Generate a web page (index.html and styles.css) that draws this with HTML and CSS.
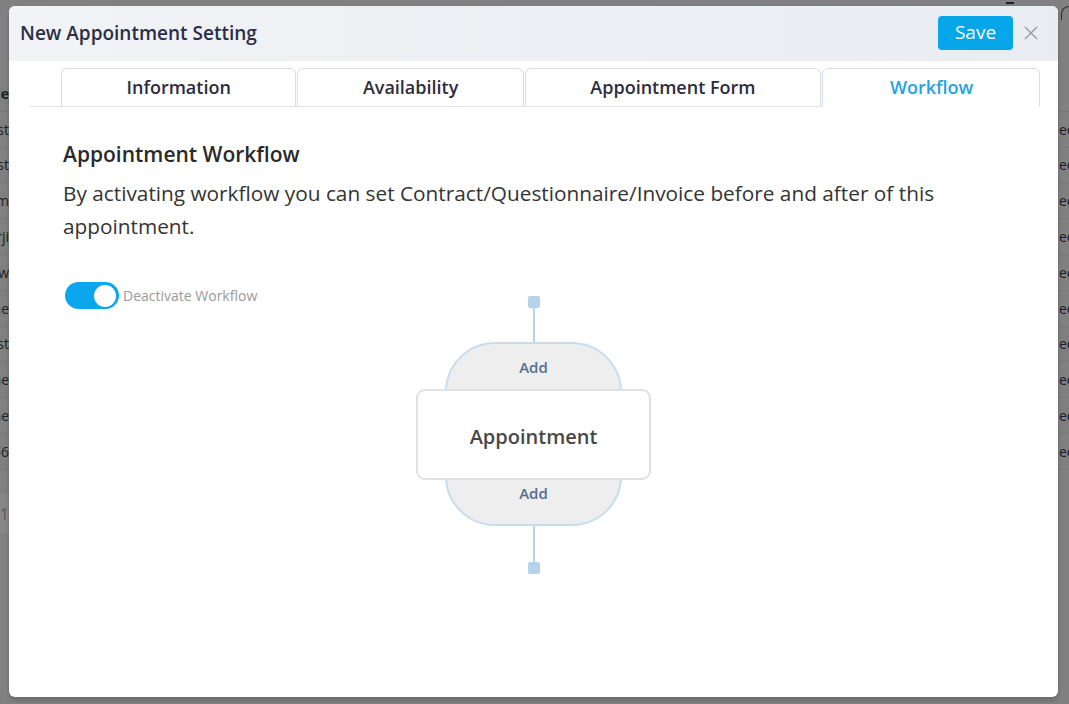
FILE: index.html
```html
<!DOCTYPE html>
<html>
<head>
<meta charset="utf-8">
<link rel="stylesheet" href="styles.css">
</head>
<body>
<div class="page">
  <div class="bg-top"><span class="bg-dash"></span><span class="bg-arc"></span></div>
  <div class="bg-table">
    <div class="bg-row bg-head"><span class="l">Title</span><span class="r"></span></div>
    <div class="bg-row"><span class="l">Test</span><span class="r">ec</span></div>
    <div class="bg-row"><span class="l">Test</span><span class="r">ec</span></div>
    <div class="bg-row"><span class="l">Firm</span><span class="r">ec</span></div>
    <div class="bg-row"><span class="l">Nurji</span><span class="r">ec</span></div>
    <div class="bg-row"><span class="l">New</span><span class="r">ec</span></div>
    <div class="bg-row"><span class="l">One</span><span class="r">ec</span></div>
    <div class="bg-row"><span class="l">Test</span><span class="r">ec</span></div>
    <div class="bg-row"><span class="l">Name</span><span class="r">ec</span></div>
    <div class="bg-row"><span class="l">Name</span><span class="r">ec</span></div>
    <div class="bg-row"><span class="l">456</span><span class="r">ec</span></div>
  </div>
  <div class="bg-pager"><span class="l">1</span></div>
</div>

<div class="modal">
  <div class="modal-header">
    <div class="modal-title">New Appointment Setting</div>
    <div class="header-actions">
      <button class="btn-save">Save</button>
      <span class="btn-close">
        <svg width="14" height="14" viewBox="0 0 14 14"><path d="M1 1L13 13M13 1L1 13" stroke="#9a9a9a" stroke-width="1.4" fill="none"/></svg>
      </span>
    </div>
  </div>
  <div class="tabs">
    <div class="tab">Information</div>
    <div class="tab">Availability</div>
    <div class="tab">Appointment Form</div>
    <div class="tab active">Workflow</div>
  </div>
  <div class="content">
    <h2 class="section-title">Appointment Workflow</h2>
    <p class="section-desc">By activating workflow you can set Contract/Questionnaire/Invoice before and after of this appointment.</p>
    <div class="workflow-area">
      <div class="toggle-row">
        <span class="toggle"><span class="knob"></span></span>
        <span class="toggle-label">Deactivate Workflow</span>
      </div>
      <div class="diagram">
        <span class="node-dot"></span>
        <span class="connector"></span>
        <div class="capsule">
          <div class="add">Add</div>
          <div class="appt-box">Appointment</div>
          <div class="add add-bottom">Add</div>
        </div>
        <span class="connector bottom"></span>
        <span class="node-dot"></span>
      </div>
      <div></div>
    </div>
  </div>
</div>
</body>
</html>
```
FILE: styles.css
```css
* { box-sizing: border-box; }
html, body { margin: 0; padding: 0; }
body {
  width: 1069px;
  height: 704px;
  overflow: hidden;
  background: #808080;
  font-family: "Open Sans", "Noto Sans", sans-serif;
  position: relative;
}

/* dimmed page behind the modal */
.page { color: #1f1f1f; font-size: 14px; }
.bg-top { height: 76px; position: relative; }
.bg-dash { position: absolute; left: 1006px; top: 2px; width: 8px; height: 2px; background: #222; }
.bg-arc { position: absolute; left: 1061px; top: 6px; width: 10px; height: 14px; border-left: 1px solid #333; border-top: 1px solid #333; border-radius: 8px 0 0 0; }
.bg-table { display: flex; flex-direction: column; }
.bg-row {
  height: 35.8px;
  display: flex;
  justify-content: space-between;
  align-items: center;
  border-bottom: 1px solid #777;
}
.bg-head { font-weight: 700; border-bottom: 1px solid #767676; }
.bg-row .l {
  width: 9px;
  display: flex;
  justify-content: flex-end;
  white-space: nowrap;
  overflow: hidden;
}
.bg-row .r {
  width: 10px;
  white-space: nowrap;
  overflow: hidden;
  height: 100%;
  display: flex;
  align-items: center;
  color: #1a1a2a;
}
.bg-pager {
  margin-top: 24px;
  height: 40px;
  width: 9px;
  background: #868686;
  display: flex;
  align-items: center;
  justify-content: flex-end;
  color: #5a5a5a;
  font-size: 16px;
  overflow: hidden;
}

/* modal */
.modal {
  position: absolute;
  left: 9px;
  top: 6px;
  width: 1049px;
  height: 691px;
  background: #fff;
  border-radius: 6px;
  box-shadow: 0 3px 4px rgba(0,0,0,0.18);
  overflow: hidden;
}
.modal-header {
  height: 55px;
  background: linear-gradient(90deg, #f1f3f6, #e9ecf1);
  display: flex;
  align-items: center;
  justify-content: space-between;
  padding: 0 20px 1px 11px;
}
.modal-title {
  font-size: 19px;
  font-weight: 600;
  color: #2b2e47;
}
.header-actions { display: flex; align-items: center; gap: 11px; }
.btn-save {
  height: 34px;
  width: 75px;
  border: none;
  border-radius: 4px;
  background: #06a6e8;
  color: #fff;
  font-family: inherit;
  font-size: 19px;
  padding: 0 0 2px;
}
.btn-close { display: flex; width: 14px; height: 14px; }

.tabs {
  margin: 7px 21px 0;
  padding-left: 31px;
  display: flex;
  border-bottom: 1px solid #dfe3ea;
}
.tab {
  height: 38px;
  padding: 0 64.5px 1px;
  display: flex;
  align-items: center;
  flex-shrink: 0;
  white-space: nowrap;
  border: 1px solid #d9dee6;
  border-bottom: none;
  border-radius: 6px 6px 0 0;
  margin-right: 1px;
  margin-bottom: -1px;
  font-size: 18px;
  font-weight: 600;
  color: #2c2c3c;
  background: #fff;
}
.tab.active {
  color: #1da5e5;
  border-bottom: 1px solid #fff;
  height: 39px;
  padding: 0 66px 1px 67px;
}

.content { padding: 33px 54px 0; }
.section-title {
  margin: 0;
  font-size: 21px;
  font-weight: 600;
  color: #2a2a2a;
  line-height: 28px;
}
.section-desc {
  margin: 9px 0 0;
  font-size: 20.8px;
  line-height: 33px;
  color: #333;
  max-width: 920px;
}

.workflow-area {
  margin-top: 39px;
  display: grid;
  grid-template-columns: 1fr auto 1fr;
  align-items: start;
}
.toggle-row { display: flex; align-items: center; gap: 4px; padding-left: 2px; }
.toggle {
  width: 54px;
  height: 27px;
  border-radius: 14px;
  background: #0aa6ee;
  display: flex;
  align-items: center;
  justify-content: flex-end;
  padding-right: 3px;
}
.knob { width: 22px; height: 22px; border-radius: 50%; background: #fff; }
.toggle-label { font-size: 14px; color: #9a9a9a; }

.diagram {
  margin-top: 14px;
  display: flex;
  flex-direction: column;
  align-items: center;
}
.node-dot {
  width: 12px;
  height: 12px;
  border-radius: 2px;
  background: #b6d3ea;
}
.connector { width: 2px; height: 34px; background: #b6d3ea; }
.connector.bottom { height: 36px; }
.capsule {
  width: 177px;
  height: 184px;
  border: 2px solid #c6ddef;
  border-radius: 50px;
  background: #eeeeee;
  display: flex;
  flex-direction: column;
  align-items: center;
  padding-top: 13px;
}
.add {
  font-size: 15px;
  line-height: 20px;
  font-weight: 600;
  color: #566e90;
}
.add-bottom { margin-top: 3px; }
.appt-box {
  margin-top: 12px;
  width: 235px;
  height: 91px;
  flex-shrink: 0;
  border: 2px solid #e1e1e1;
  border-radius: 9px;
  background: #fff;
  display: flex;
  align-items: center;
  justify-content: center;
  font-size: 20px;
  font-weight: 600;
  color: #484848;
  padding-top: 4px;
}
```
